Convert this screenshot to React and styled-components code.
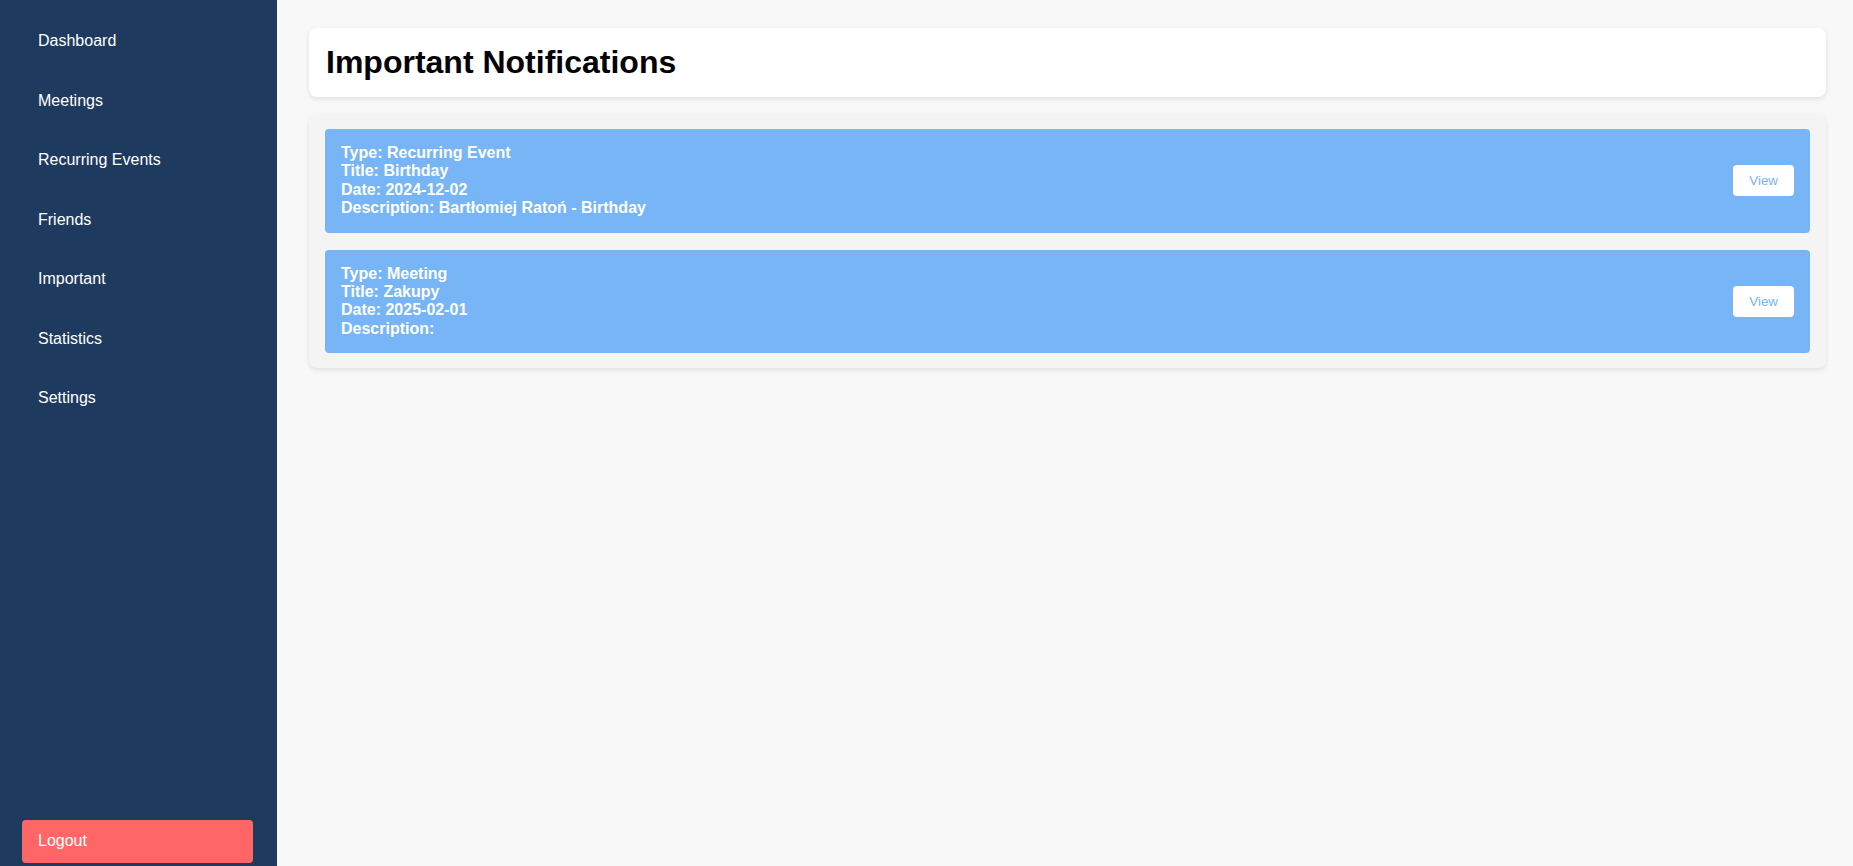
import React from "react";
import styled, { createGlobalStyle } from "styled-components";

const GlobalStyle = createGlobalStyle`
  html, body { margin: 0; padding: 0; }
  body {
    font-family: "Liberation Sans", Arial, sans-serif;
    background: #f8f8f8;
  }
  * { box-sizing: border-box; }
`;

const Layout = styled.div`
  display: flex;
  min-height: 866px;
  height: 100vh;
`;

const Sidebar = styled.aside`
  width: 277px;
  flex-shrink: 0;
  background: #1f3a5f;
  display: flex;
  flex-direction: column;
  justify-content: space-between;
  padding: 20px 24px 3px 22px;
`;

const NavList = styled.nav`
  display: flex;
  flex-direction: column;
  gap: 17.15px;
`;

const NavItem = styled.a`
  display: block;
  padding: 12px 16px;
  color: #ffffff;
  font-size: 16px;
  line-height: 18.4px;
  text-decoration: none;
  cursor: pointer;
`;

const LogoutButton = styled.button`
  display: block;
  width: 100%;
  border: none;
  border-radius: 4px;
  background: #ff6666;
  color: #ffffff;
  text-align: left;
  font-family: "Liberation Sans", Arial, sans-serif;
  font-size: 16px;
  line-height: 18.4px;
  padding: 12.5px 16px;
  cursor: pointer;
`;

const Main = styled.main`
  flex: 1;
  padding: 28px 27px 28px 32px;
  display: flex;
  flex-direction: column;
  gap: 18px;
`;

const HeaderCard = styled.header`
  background: #ffffff;
  border-radius: 8px;
  box-shadow: 0 2px 5px rgba(0, 0, 0, 0.1);
  padding: 16px 17px;
`;

const Title = styled.h1`
  margin: 0;
  font-size: 32px;
  line-height: 37px;
  font-weight: 700;
  color: #000000;
`;

const ListCard = styled.section`
  background: #f4f4f4;
  border-radius: 8px;
  box-shadow: 0 2px 5px rgba(0, 0, 0, 0.1);
  padding: 14px 16px 15px;
  display: flex;
  flex-direction: column;
  gap: 17px;
`;

const NotificationRow = styled.div`
  background: #77b5f7;
  border-radius: 4px;
  padding: 15px 16px;
  display: flex;
  align-items: center;
  justify-content: space-between;
`;

const Details = styled.div`
  color: #ffffff;
  font-weight: 700;
  font-size: 16px;
  line-height: 18.4px;
`;

const Line = styled.div``;

const ViewButton = styled.button`
  background: #ffffff;
  color: #77b5f7;
  border: none;
  border-radius: 4px;
  font-family: "Liberation Sans", Arial, sans-serif;
  font-size: 13.333px;
  line-height: 15px;
  padding: 8px 16px;
  cursor: pointer;
`;

const navItems = [
  "Dashboard",
  "Meetings",
  "Recurring Events",
  "Friends",
  "Important",
  "Statistics",
  "Settings",
];

const notifications = [
  {
    type: "Recurring Event",
    title: "Birthday",
    date: "2024-12-02",
    description: "Bartłomiej Ratoń - Birthday",
  },
  {
    type: "Meeting",
    title: "Zakupy",
    date: "2025-02-01",
    description: "",
  },
];

export default function App() {
  return (
    <>
      <GlobalStyle />
      <Layout>
        <Sidebar>
          <NavList>
            {navItems.map((item) => (
              <NavItem key={item}>{item}</NavItem>
            ))}
          </NavList>
          <LogoutButton>Logout</LogoutButton>
        </Sidebar>
        <Main>
          <HeaderCard>
            <Title>Important Notifications</Title>
          </HeaderCard>
          <ListCard>
            {notifications.map((n) => (
              <NotificationRow key={n.title}>
                <Details>
                  <Line>Type: {n.type}</Line>
                  <Line>Title: {n.title}</Line>
                  <Line>Date: {n.date}</Line>
                  <Line>Description: {n.description}</Line>
                </Details>
                <ViewButton>View</ViewButton>
              </NotificationRow>
            ))}
          </ListCard>
        </Main>
      </Layout>
    </>
  );
}
